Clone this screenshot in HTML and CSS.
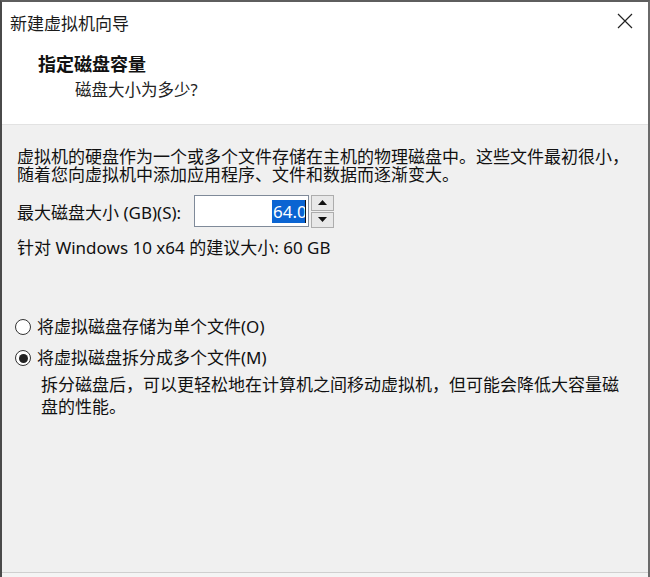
FILE: index.html
```html
<!DOCTYPE html>
<html lang="zh-CN">
<head>
    <meta charset="UTF-8">
    <meta name="viewport" content="width=device-width, initial-scale=1.0">
    <title>新建虚拟机向导</title>
    <link rel="stylesheet" href="styles.css">
</head>
<body>
    <div class="window">
        <div class="titlebar">
            <span class="title">新建虚拟机向导</span>
            <svg class="close" width="16" height="16" viewBox="0 0 16 16">
                <path d="M1 1 L15 15 M15 1 L1 15" stroke="#222" stroke-width="1.2" fill="none"/>
            </svg>
        </div>

        <div class="header">
            <h1>指定磁盘容量</h1>
            <p class="subtitle">磁盘大小为多少?</p>
        </div>

        <div class="content">
            <p class="intro">虚拟机的硬盘作为一个或多个文件存储在主机的物理磁盘中。这些文件最初很小，<br>随着您向虚拟机中添加应用程序、文件和数据而逐渐变大。</p>

            <div class="size-row">
                <label class="size-label">最大磁盘大小 (GB)(S):</label>
                <div class="textbox">
                    <span class="selected">64.0</span>
                    <span class="caret"></span>
                </div>
                <div class="spinner">
                    <div class="spin-btn">
                        <svg width="9" height="5" viewBox="0 0 9 5"><path d="M0 5 L4.5 0 L9 5 Z" fill="#111"/></svg>
                    </div>
                    <div class="spin-btn">
                        <svg width="9" height="5" viewBox="0 0 9 5"><path d="M0 0 L9 0 L4.5 5 Z" fill="#111"/></svg>
                    </div>
                </div>
            </div>

            <p class="recommend">针对 Windows 10 x64 的建议大小: 60 GB</p>

            <div class="options">
                <div class="radio-row">
                    <span class="radio"></span>
                    <span>将虚拟磁盘存储为单个文件(O)</span>
                </div>
                <div class="radio-row">
                    <span class="radio checked"></span>
                    <span>将虚拟磁盘拆分成多个文件(M)</span>
                </div>
                <p class="option-desc">拆分磁盘后，可以更轻松地在计算机之间移动虚拟机，但可能会降低大容量磁<br>盘的性能。</p>
            </div>
        </div>

        <div class="footer"></div>
    </div>
</body>
</html>
```

FILE: styles.css
```css
body {
    margin: 0;
    font-family: "Noto Sans", "Noto Sans CJK SC", sans-serif;
    color: #111;
    background: #f0f0f0;
}

.window {
    height: 577px;
    box-sizing: border-box;
    border-top: 2px solid #5e5e5e;
    border-left: 2px solid #4a4a4a;
    border-right: 2px solid #6a6a6a;
    display: flex;
    flex-direction: column;
    background: #f0f0f0;
}

.titlebar {
    height: 40px;
    background: #fff;
    display: flex;
    align-items: center;
    justify-content: space-between;
    padding: 0 15px 0 8px;
}

.title {
    font-size: 17px;
    color: #1a1a1a;
}

.close {
    display: block;
    margin-top: -2px;
}

.header {
    background: #fff;
    padding: 11px 0 23px 0;
    border-bottom: 1px solid #e2e2e2;
}

.header h1 {
    margin: 0;
    padding-left: 36px;
    font-size: 18px;
    line-height: 22px;
    font-weight: bold;
}

.subtitle {
    margin: 4px 0 0 0;
    padding-left: 73px;
    font-size: 16.5px;
    line-height: 22px;
    color: #222;
}

.content {
    flex: 1;
    padding: 23px 0 0 15px;
    font-size: 17px;
}

.intro {
    margin: 0;
    line-height: 18px;
    white-space: nowrap;
}

.size-row {
    display: flex;
    align-items: center;
    margin-top: 11px;
    height: 32px;
}

.size-label {
    width: 177px;
    white-space: nowrap;
}

.textbox {
    width: 111px;
    height: 30px;
    border: 1px solid #7f8a99;
    background: #fff;
    display: flex;
    align-items: center;
    justify-content: flex-end;
    padding-right: 2px;
    overflow: hidden;
}

.selected {
    background: #0a64d2;
    color: #fff;
    line-height: 23px;
    width: 32px;
    overflow: hidden;
    white-space: nowrap;
    padding-left: 1px;
}

.caret {
    width: 1px;
    height: 23px;
    background: #111;
}

.spinner {
    margin-left: 2px;
    display: flex;
    flex-direction: column;
    gap: 1px;
}

.spin-btn {
    width: 21px;
    height: 14px;
    border: 1px solid #adadad;
    background: #e8e8e8;
    display: flex;
    align-items: center;
    justify-content: center;
}

.recommend {
    margin: 11px 0 0 0;
    line-height: 20px;
}

.options {
    margin-top: 59px;
}

.radio-row {
    display: flex;
    align-items: center;
    gap: 6px;
    line-height: 20px;
    margin-bottom: 11px;
}

.radio {
    width: 14px;
    height: 14px;
    border: 1px solid #333;
    border-radius: 50%;
    background: #fff;
    margin-left: -2px;
    display: flex;
    align-items: center;
    justify-content: center;
}

.radio.checked::after {
    content: "";
    width: 9px;
    height: 9px;
    border-radius: 50%;
    background: #222;
}

.option-desc {
    margin: -5px 0 0 24px;
    line-height: 22px;
    white-space: nowrap;
}

.footer {
    height: 4px;
    border-top: 1px solid #cfcfcf;
    background: #f4f4f4;
}
```
